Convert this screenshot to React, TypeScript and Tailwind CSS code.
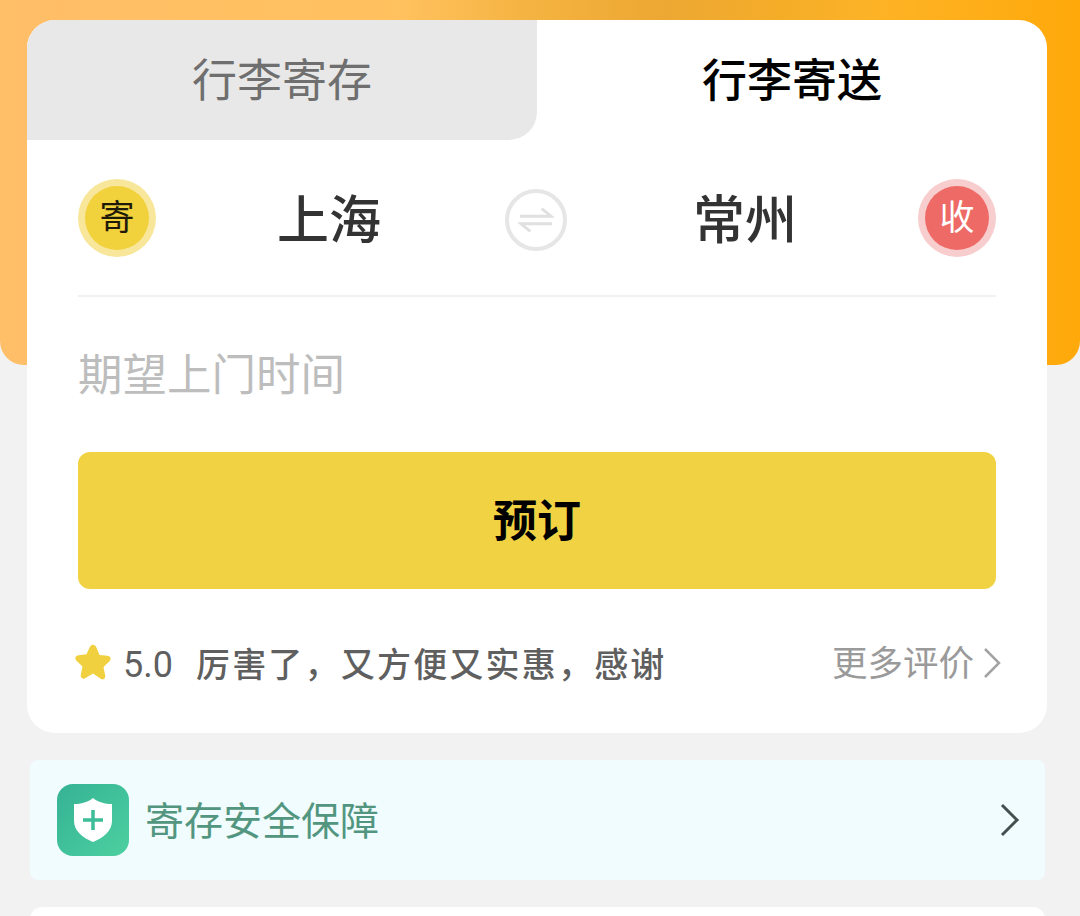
import React from "react";

const cjk = "font-['Roboto','Noto_Sans_CJK_SC',sans-serif]";

function Badge({ label, ring, fill, text }: { label: string; ring: string; fill: string; text: string }) {
  return (
    <div className={`w-[78px] h-[78px] rounded-full flex items-center justify-center shrink-0 ${ring}`}>
      <div className={`w-[64px] h-[64px] rounded-full flex items-center justify-center text-[35px] leading-none pt-[2px] ${fill} ${text}`}>{label}</div>
    </div>
  );
}

export default function App() {
  return (
    <div className={`w-[1080px] h-[916px] overflow-hidden bg-[#f2f2f3] ${cjk}`}>
      <div className="relative h-[365px] rounded-b-[24px] bg-[linear-gradient(90deg,#ffbe68_0%,#ffc25c_45%,#fdb62f_75%,#ffa90a_100%)] overflow-hidden">
        <div className="absolute top-0 left-[400px] w-[480px] h-[20px] bg-[linear-gradient(90deg,#f5b03c00_0%,#efab3499_25%,#e8a32fcc_55%,#f0a51f99_80%,#ffa90a00_100%)]" />
      </div>

      <div className="relative -mt-[345px] mx-[27px] w-[1020px] h-[713px] bg-white rounded-[28px] overflow-hidden">
        <div className="flex h-[120px]">
          <div className="w-[510px] bg-[#e8e8e8] rounded-br-[28px] flex items-center justify-center pt-[3px] text-[45px] leading-none text-[#6f6f6f]">行李寄存</div>
          <div className="w-[510px] flex items-center justify-center pt-[3px] font-medium text-[45px] leading-none text-black">行李寄送</div>
        </div>

        <div className="px-[51px]">
          <div className="flex items-center h-[157px] border-b-2 border-[#f1f1f1]">
            <Badge label="寄" ring="bg-[#f8e69a]" fill="bg-[#f1d13c]" text="text-[#1f1a08]" />
            <div className="w-[346px] text-center text-[52px] leading-none font-medium text-[#333333] pt-[8px]">上海</div>
            <div className="w-[62px] h-[62px] ml-[3px] mt-[4px] rounded-full border-[4px] border-[#e6e6e6] shrink-0 flex items-center justify-center">
              <svg width="36" height="30" viewBox="0 0 38 30" fill="none" stroke="#e0e0e0" strokeWidth="3">
                <path d="M2 11H35L25 3" />
                <path d="M36 19H3L13 27" />
              </svg>
            </div>
            <div className="w-[351px] pl-[5px] text-center text-[52px] leading-none font-medium text-[#333333] pt-[8px]">常州</div>
            <Badge label="收" ring="bg-[#f8cdce]" fill="bg-[#ee6a66]" text="text-white" />
          </div>

          <div className="h-[155px] flex items-center text-[44.500px] leading-none text-[#bdbdbd] pt-[4px]">期望上门时间</div>

          <div className="h-[137px] rounded-[12px] bg-[#f1d243] flex items-center justify-center pt-[2px] text-[44px] leading-none font-bold text-black">预订</div>

          <div className="flex items-center justify-between h-[146px] pt-[6px] -mx-[5px]">
            <div className="flex items-center text-[#5f5f5f] font-medium">
              <svg width="40" height="42" viewBox="0 0 40 40" preserveAspectRatio="none" className="shrink-0 -mt-[4px]">
                <path d="M20 2.5c1.600 0 2.600 1 3.300 2.500l3.200 7.300 8 .9c3 .4 4.200 3 2 5.200l-6 5.500 1.700 8c.6 3-1.800 4.600-4.400 3.200L20 30l-7.800 4.500c-2.600 1.400-5-.2-4.400-3.200l1.700-8-6-5.500c-2.200-2.200-1-4.800 2-5.200l8-.9L16.700 5c.7-1.500 1.700-2.500 3.300-2.500z" fill="#f1d03f" />
              </svg>
              <span className="ml-[10px] text-[36px] leading-none font-normal">5.0</span>
              <span className="ml-[23px] text-[34px] tracking-[2.200px] leading-none">厉害了，又方便又实惠，感谢</span>
            </div>
            <div className="flex items-center text-[#9a9a9a]">
              <span className="text-[35.500px] leading-none">更多评价</span>
              <svg width="18" height="32" viewBox="0 0 18 32" fill="none" stroke="#a3a3a3" strokeWidth="2.500" className="ml-[9px] -mt-[4px]">
                <path d="M2 2L16 16L2 30" />
              </svg>
            </div>
          </div>
        </div>
      </div>

      <div className="mt-[27px] ml-[30px] w-[1015px] h-[120px] bg-[#f0fcfd] rounded-[8px] flex items-center pl-[27px] pr-[25px]">
        <div className="w-[72px] h-[72px] rounded-[16px] bg-gradient-to-br from-[#35b294] to-[#4dd0a0] flex items-center justify-center shrink-0">
          <svg width="42" height="46" viewBox="0 0 42 46">
            <path d="M21 1C26 5 33 7 40 7V24C40 34 31 41 21 45C11 41 2 34 2 24V7C9 7 16 5 21 1Z" fill="#ffffff" />
            <path d="M21 13V33M11 23H31" stroke="#3dbd98" strokeWidth="3.500" fill="none" />
          </svg>
        </div>
        <div className="ml-[16px] pt-[5px] text-[39px] leading-none text-[#539680] flex-1">寄存安全保障</div>
        <svg width="20" height="34" viewBox="0 0 20 34" fill="none" stroke="#44504f" strokeWidth="3">
          <path d="M2 2L17 17L2 32" />
        </svg>
      </div>

      <div className="mt-[27px] ml-[30px] w-[1015px] h-[40px] bg-white rounded-t-[12px]" />
    </div>
  );
}
